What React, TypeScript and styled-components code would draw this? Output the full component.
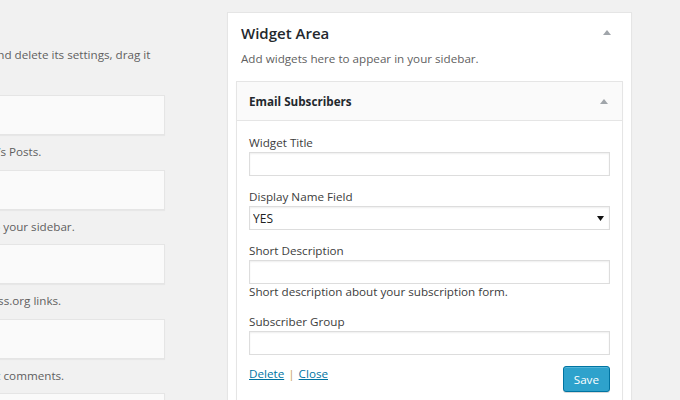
import styled, { createGlobalStyle } from "styled-components";

const GlobalStyle = createGlobalStyle`
  *, *::before, *::after {
    box-sizing: border-box;
  }

  html, body {
    margin: 0;
    padding: 0;
  }

  body {
    background: #f1f1f1;
    font-family: "Open Sans", "Liberation Sans", sans-serif;
    font-size: 11.66px;
    color: #444;
    overflow: hidden;
  }
`;

const available = [
    { title: "Archives", desc: "A monthly archive of your site\u2019s Posts." },
    { title: "Calendar", desc: "A calendar of your site\u2019s Posts." },
    { title: "Categories", desc: "A list or dropdown of categories." },
    { title: "Custom Menu", desc: "Add a custom menu to your sidebar." },
    { title: "Links", desc: "Your blogroll" },
    { title: "Meta", desc: "Login, RSS, & WordPress.org links." },
    { title: "Pages", desc: "A list of your site\u2019s Pages." },
    { title: "Recent Comments", desc: "Your site\u2019s most recent comments." },
    { title: "Recent Posts", desc: "Your site\u2019s most recent Posts." },
    { title: "RSS", desc: "Entries from any RSS or Atom feed." },
];

const Toggle = ({ color = "#a0a5aa" }: { color?: string }) => (
    <svg width="8" height="5" viewBox="0 0 8 5">
        <polygon points="0,5 8,5 4,0" fill={color} />
    </svg>
);

export default function App() {
    return (
        <>
            <GlobalStyle />
            <Page>
                <Available>
                    <Intro>
                        To activate a widget drag it to a sidebar or click on it. To deactivate a widget and delete its settings, drag it back.
                    </Intro>
                    <WidgetGrid>
                        {available.map((w) => (
                            <div key={w.title}>
                                <WidgetBox>{w.title}</WidgetBox>
                                <WidgetDesc>{w.desc}</WidgetDesc>
                            </div>
                        ))}
                    </WidgetGrid>
                </Available>

                <Sidebar>
                    <SidebarHead>
                        <SidebarTitle>Widget Area</SidebarTitle>
                        <HandleArea>
                            <Toggle />
                        </HandleArea>
                    </SidebarHead>
                    <SidebarDesc>Add widgets here to appear in your sidebar.</SidebarDesc>

                    <Widget>
                        <WidgetTop>
                            <WidgetName>Email Subscribers</WidgetName>
                            <Toggle />
                        </WidgetTop>
                        <WidgetBody>
                            <Field>
                                <Label>Widget Title</Label>
                                <Input type="text" />
                            </Field>
                            <Field>
                                <Label>Display Name Field</Label>
                                <SelectWrap>
                                    <Select defaultValue="YES">
                                        <option>YES</option>
                                        <option>NO</option>
                                    </Select>
                                    <SelectArrow width="7" height="5" viewBox="0 0 7 5">
                                        <polygon points="0,0 7,0 3.5,5" fill="#111" />
                                    </SelectArrow>
                                </SelectWrap>
                            </Field>
                            <Field>
                                <Label>Short Description</Label>
                                <Input type="text" />
                                <Help>Short description about your subscription form.</Help>
                            </Field>
                            <Field>
                                <Label>Subscriber Group</Label>
                                <Input type="text" />
                            </Field>
                            <Footer>
                                <Links>
                                    <Link href="#">Delete</Link>
                                    <Sep>|</Sep>
                                    <Link href="#">Close</Link>
                                </Links>
                                <SaveButton type="button">Save</SaveButton>
                            </Footer>
                        </WidgetBody>
                    </Widget>
                </Sidebar>
            </Page>
        </>
    );
}

const Page = styled.div`
    display: flex;
    align-items: flex-start;
    width: 680px;
    height: 400px;
    overflow: hidden;
`;

const Available = styled.section`
    flex: none;
    width: 585px;
    margin-left: -420px;
    padding-top: 46px;
`;

const Intro = styled.p`
    margin: 0 0 13px;
    line-height: 18px;
    color: #5f5f5f;
`;

const WidgetGrid = styled.div`
    display: grid;
    grid-template-columns: 1fr 1fr;
    column-gap: 9px;
`;

const WidgetBox = styled.div`
    height: 40px;
    padding: 0 15px;
    display: flex;
    align-items: center;
    background: #fafafa;
    border: 1px solid #e5e5e5;
    box-shadow: 0 1px 1px rgba(0, 0, 0, 0.04);
    font-weight: 600;
    color: #23282d;
`;

const WidgetDesc = styled.div`
    padding: 8px 0 8.5px;
    line-height: 18px;
    color: #5f5f5f;
`;

const Sidebar = styled.section`
    flex: none;
    width: 405px;
    height: 420px;
    margin: 12px 0 0 62px;
    background: #fff;
    border: 1px solid #e5e5e5;
    box-shadow: 0 1px 1px rgba(0, 0, 0, 0.04);
`;

const SidebarHead = styled.div`
    display: flex;
    align-items: center;
    justify-content: space-between;
    padding: 10px 0 0 13px;
`;

const SidebarTitle = styled.h3`
    margin: 0;
    font-size: 15px;
    font-weight: 600;
    line-height: 20px;
    color: #23282d;
`;

const HandleArea = styled.div`
    width: 48px;
    display: flex;
    justify-content: center;
    padding-bottom: 2px;
`;

const SidebarDesc = styled.p`
    margin: 7px 13px 13px;
    line-height: 18px;
    color: #5f5f5f;
`;

const Widget = styled.div`
    margin: 0 8px;
    border: 1px solid #e5e5e5;
    box-shadow: 0 1px 1px rgba(0, 0, 0, 0.04);
    background: #fff;
`;

const WidgetTop = styled.div`
    height: 39px;
    display: flex;
    align-items: center;
    justify-content: space-between;
    padding: 0 14px 0 12px;
    background: #fafafa;
    border-bottom: 1px solid #e5e5e5;
`;

const WidgetName = styled.h4`
    margin: 0;
    font-size: 11.66px;
    font-weight: 700;
    color: #23282d;
`;

const WidgetBody = styled.div`
    padding: 13px 12px 12px;
`;

const Field = styled.div`
    margin-bottom: 12px;
`;

const Label = styled.label`
    display: block;
    line-height: 18px;
    color: #3c3c3c;
`;

const Input = styled.input`
    display: block;
    width: 100%;
    height: 24px;
    margin: 0;
    padding: 2px 4px;
    border: 1px solid #ddd;
    border-radius: 0;
    background: #fff;
    box-shadow: inset 0 1px 2px rgba(0, 0, 0, 0.07);
    font: inherit;
    color: #333;
    outline: none;
`;

const SelectWrap = styled.div`
    position: relative;
`;

const Select = styled.select`
    display: block;
    width: 100%;
    height: 24px;
    margin: 0;
    padding: 0 3px;
    border: 1px solid #ddd;
    border-radius: 0;
    background: #fff;
    box-shadow: inset 0 1px 2px rgba(0, 0, 0, 0.07);
    appearance: none;
    font: inherit;
    font-size: 12px;
    color: #222;
    outline: none;
`;

const SelectArrow = styled.svg`
    position: absolute;
    right: 6px;
    top: 10px;
    pointer-events: none;
`;

const Help = styled.div`
    margin-top: -1px;
    line-height: 18px;
    color: #3c3c3c;
`;

const Footer = styled.div`
    display: flex;
    align-items: flex-start;
    justify-content: space-between;
    margin-top: -2px;
`;

const Links = styled.div`
    line-height: 18px;
`;

const Link = styled.a`
    color: #0074a2;
    text-decoration: underline;
`;

const Sep = styled.span`
    margin: 0 4px;
    color: #c9a45e;
`;

const SaveButton = styled.button`
    height: 26px;
    margin-top: 1px;
    padding: 0 10px;
    border: 1px solid #0074a2;
    border-radius: 3px;
    background: #2ea2cc;
    box-shadow: inset 0 1px 0 rgba(120, 200, 230, 0.5), 0 1px 0 rgba(0, 0, 0, 0.15);
    font: inherit;
    color: #fff;
    cursor: pointer;
`;
